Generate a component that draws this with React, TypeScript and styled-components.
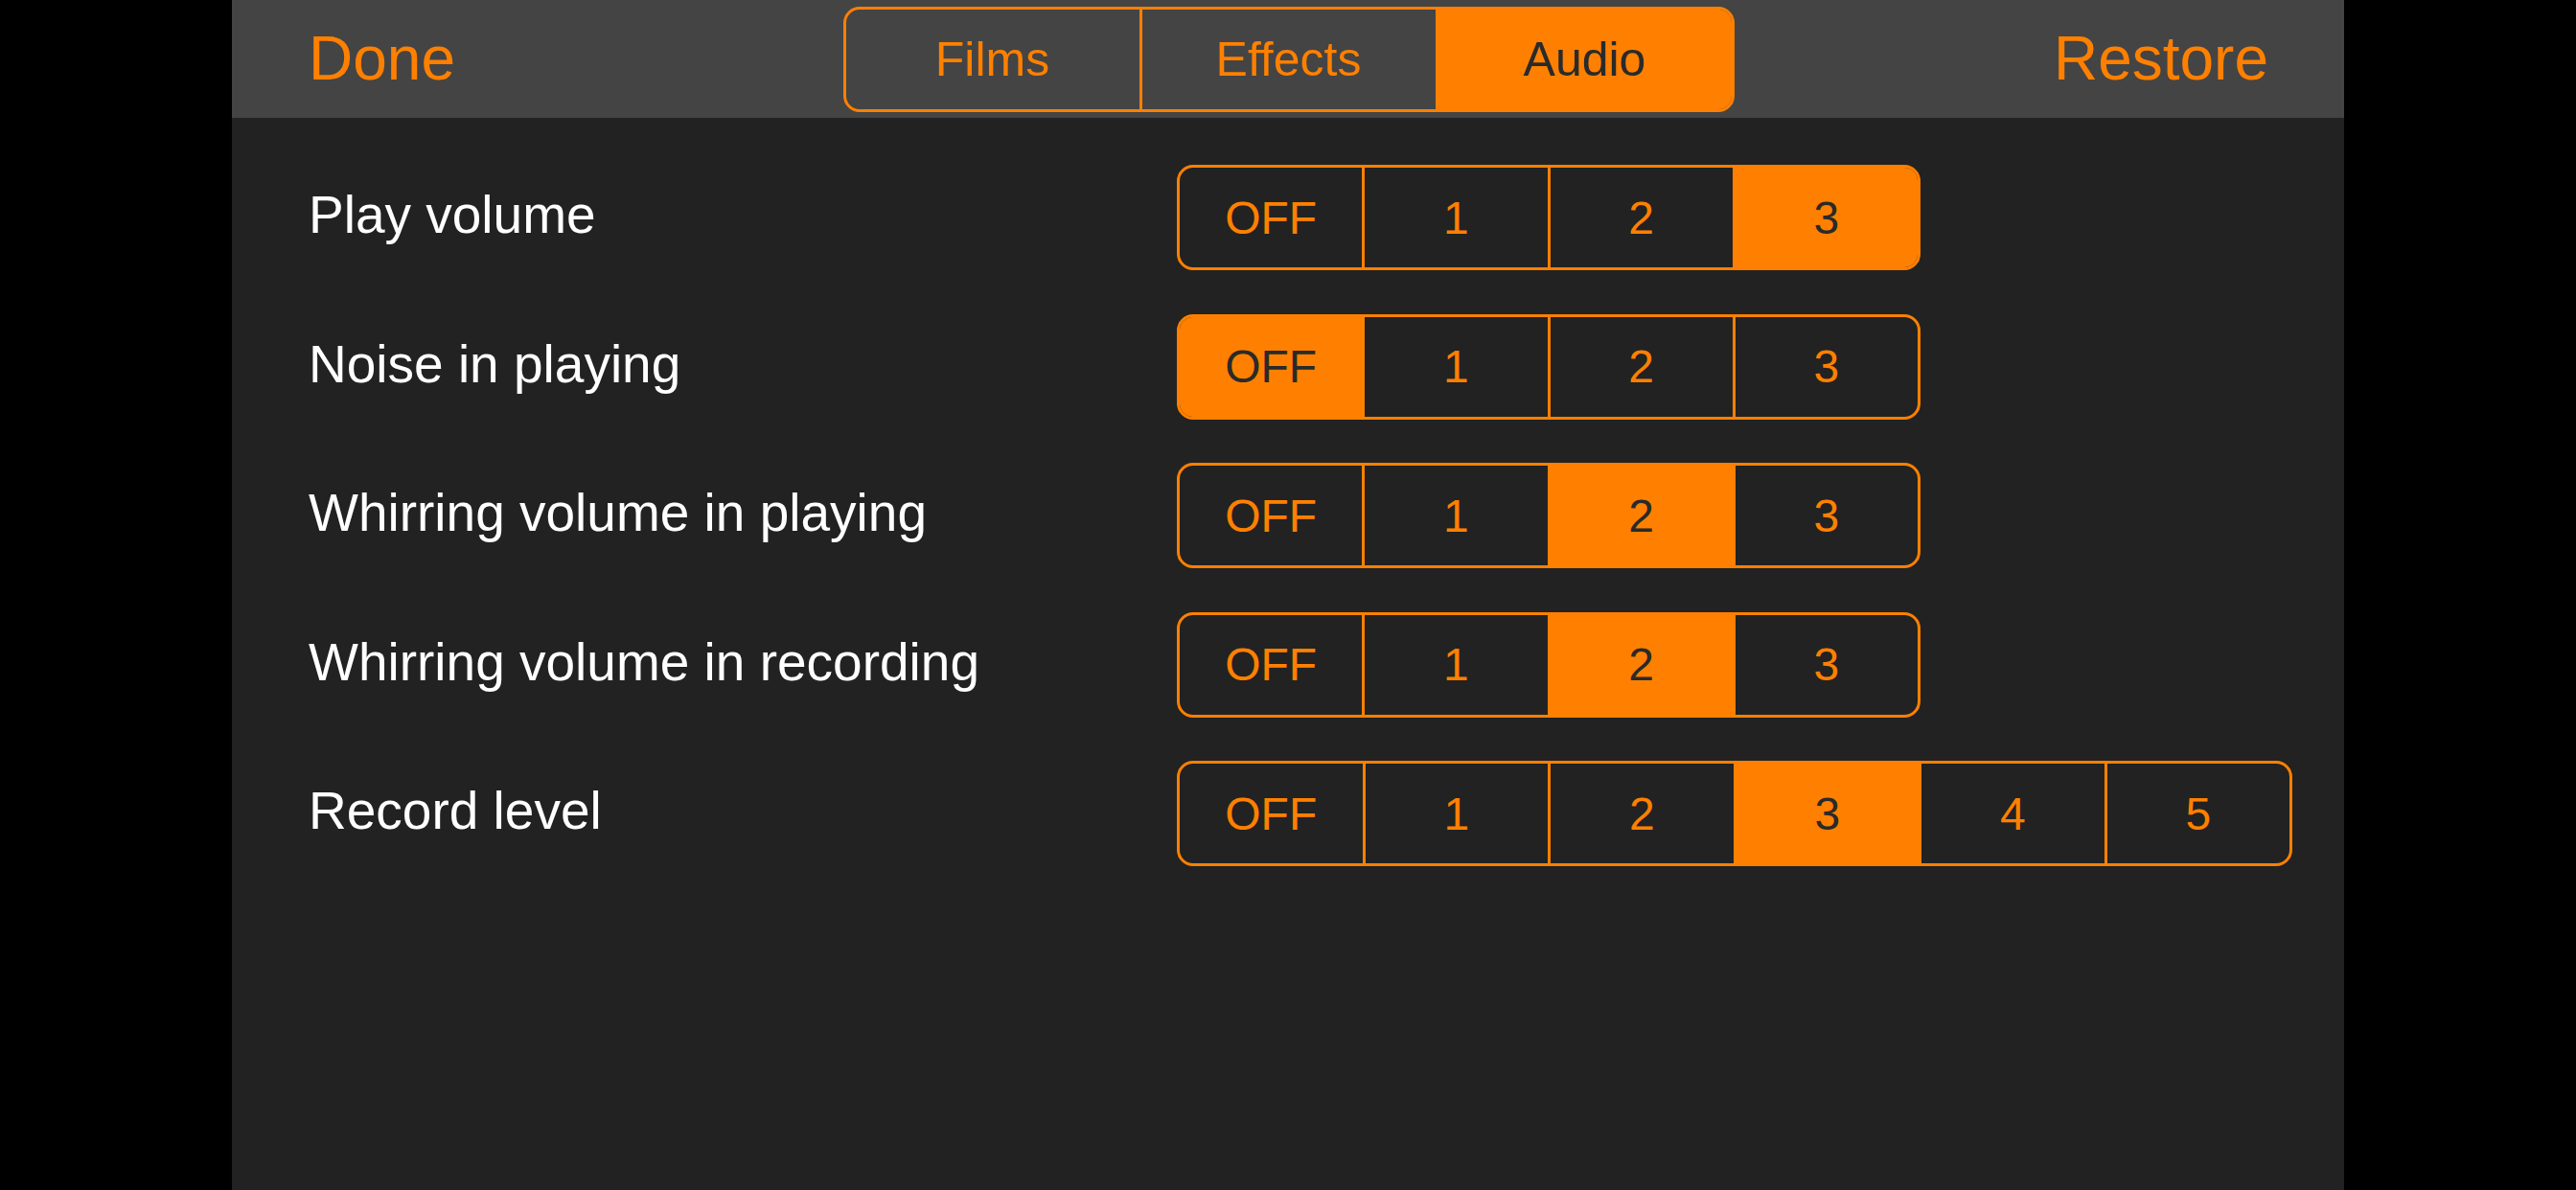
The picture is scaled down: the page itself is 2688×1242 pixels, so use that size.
import React, { useState } from "react";
import styled, { createGlobalStyle } from "styled-components";

const ORANGE = "#ff8000";
const SEG_WIDTH = 194;

const GlobalStyle = createGlobalStyle`
	html, body {
		margin: 0;
		padding: 0;
		background: #000000;
	}

	body {
		font-family: "Liberation Sans", Arial, sans-serif;
	}
`;

const Screen = styled.div`
	width: 2688px;
	height: 1242px;
	display: flex;
	justify-content: center;
	background: #000000;
`;

const Panel = styled.div`
	width: 2204px;
	height: 100%;
	display: flex;
	flex-direction: column;
	background: #222222;
`;

const Header = styled.div`
	height: 123px;
	display: grid;
	grid-template-columns: 1fr auto 1fr;
	align-items: center;
	padding: 0 79px 0 80px;
	background: #444444;
	box-sizing: border-box;
`;

const HeaderButton = styled.button<{ $align: "left" | "right" }>`
	justify-self: ${({ $align }) => ($align === "left" ? "start" : "end")};
	background: none;
	border: none;
	padding: 0;
	margin-top: -2px;
	color: ${ORANGE};
	font-family: "Liberation Sans", Arial, sans-serif;
	font-size: 64px;
	cursor: pointer;
`;

const Segmented = styled.div<{ $width: number; $height: number }>`
	display: flex;
	width: ${({ $width }) => $width}px;
	height: ${({ $height }) => $height}px;
	border: 3px solid ${ORANGE};
	border-radius: 17px;
	overflow: hidden;
	box-sizing: border-box;
`;

const Segment = styled.button<{ $active: boolean; $size: number }>`
	flex: 1;
	display: flex;
	align-items: center;
	justify-content: center;
	padding: 0;
	border: none;
	border-left: 3px solid ${ORANGE};
	background: ${({ $active }) => ($active ? ORANGE : "transparent")};
	color: ${({ $active }) => ($active ? "#2a2a2a" : ORANGE)};
	font-family: "Liberation Sans", Arial, sans-serif;
	font-size: ${({ $size }) => $size}px;
	cursor: pointer;

	&:first-child {
		border-left: none;
	}
`;

const Content = styled.div`
	display: flex;
	flex-direction: column;
	gap: 45.5px;
	padding: 49px 0 0 80px;
`;

const SettingRow = styled.div`
	display: grid;
	grid-template-columns: 906px auto;
	align-items: center;
`;

const Label = styled.div`
	color: #ffffff;
	font-size: 55px;
	margin-top: -6px;
`;

interface SegmentedControlProps {
	options: string[];
	value: number;
	onChange: (index: number) => void;
	segmentWidth: number;
	height: number;
	fontSize: number;
}

const SegmentedControl: React.FC<SegmentedControlProps> = ({
	options,
	value,
	onChange,
	segmentWidth,
	height,
	fontSize,
}) => (
	<Segmented $width={options.length * segmentWidth} $height={height}>
		{options.map((option, i) => (
			<Segment
				key={option}
				$active={i === value}
				$size={fontSize}
				onClick={() => onChange(i)}
			>
				{option}
			</Segment>
		))}
	</Segmented>
);

const LEVELS = ["OFF", "1", "2", "3"];
const RECORD_LEVELS = ["OFF", "1", "2", "3", "4", "5"];

const initialSettings = [
	{ label: "Play volume", options: LEVELS, value: 3 },
	{ label: "Noise in playing", options: LEVELS, value: 0 },
	{ label: "Whirring volume in playing", options: LEVELS, value: 2 },
	{ label: "Whirring volume in recording", options: LEVELS, value: 2 },
	{ label: "Record level", options: RECORD_LEVELS, value: 3 },
];

export default function App() {
	const [tab, setTab] = useState(2);
	const [settings, setSettings] = useState(initialSettings);

	const updateSetting = (row: number, value: number) => {
		setSettings((prev) => prev.map((s, i) => (i === row ? { ...s, value } : s)));
	};

	return (
		<>
			<GlobalStyle />
			<Screen>
				<Panel>
					<Header>
						<HeaderButton $align="left">Done</HeaderButton>
						<SegmentedControl
							options={["Films", "Effects", "Audio"]}
							value={tab}
							onChange={setTab}
							segmentWidth={310}
							height={110}
							fontSize={50}
						/>
						<HeaderButton $align="right">Restore</HeaderButton>
					</Header>
					<Content>
						{settings.map((setting, row) => (
							<SettingRow key={setting.label}>
								<Label>{setting.label}</Label>
								<SegmentedControl
									options={setting.options}
									value={setting.value}
									onChange={(v) => updateSetting(row, v)}
									segmentWidth={SEG_WIDTH}
									height={110}
									fontSize={48}
								/>
							</SettingRow>
						))}
					</Content>
				</Panel>
			</Screen>
		</>
	);
}
